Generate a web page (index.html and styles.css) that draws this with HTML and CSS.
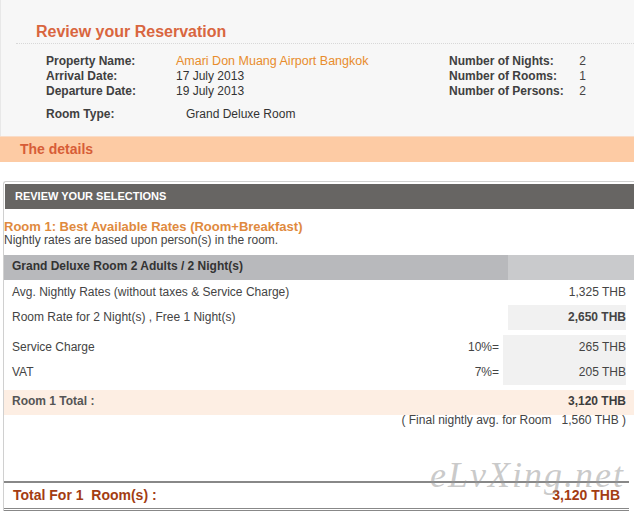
FILE: index.html
```html
<!DOCTYPE html>
<html lang="en">
<head>
    <meta charset="UTF-8">
    <title>Review your Reservation</title>
    <link rel="stylesheet" href="styles.css">
</head>
<body>
    <div class="summary">
        <h1 class="summary-title">Review your Reservation</h1>
        <div class="facts">
            <span class="fact-label">Property Name:</span>
            <span class="fact-value hotel">Amari Don Muang Airport Bangkok</span>
            <span class="fact-label">Number of Nights:</span>
            <span class="fact-num">2</span>

            <span class="fact-label">Arrival Date:</span>
            <span class="fact-value">17 July 2013</span>
            <span class="fact-label">Number of Rooms:</span>
            <span class="fact-num">1</span>

            <span class="fact-label">Departure Date:</span>
            <span class="fact-value">19 July 2013</span>
            <span class="fact-label">Number of Persons:</span>
            <span class="fact-num">2</span>
        </div>
        <div class="facts room-type">
            <span class="fact-label">Room Type:</span>
            <span class="fact-value">Grand Deluxe Room</span>
        </div>
    </div>

    <div class="details-band">The details</div>

    <div class="selections">
        <div class="selections-head">Review your selections</div>

        <div class="rate-title">Room 1: Best Available Rates (Room+Breakfast)</div>
        <div class="rate-note">Nightly rates are based upon person(s) in the room.</div>

        <div class="room-head">
            <div class="room-name">Grand Deluxe Room 2 Adults / 2 Night(s)</div>
            <div class="room-side"></div>
        </div>

        <div class="rate-row">
            <span class="rate-label">Avg. Nightly Rates (without taxes &amp; Service Charge)</span>
            <span class="rate-value">1,325 THB</span>
        </div>
        <div class="rate-row">
            <span class="rate-label">Room Rate for 2 Night(s) , Free 1 Night(s)</span>
            <span class="rate-value boxed strong">2,650 THB</span>
        </div>

        <div class="charges">
            <div class="charge-labels">
                <div class="charge-row"><span>Service Charge</span><span>10%=</span></div>
                <div class="charge-row"><span>VAT</span><span>7%=</span></div>
            </div>
            <div class="charge-values">
                <div>265 THB</div>
                <div>205 THB</div>
            </div>
        </div>

        <div class="room-total">
            <span>Room 1 Total :</span>
            <span class="room-total-value">3,120 THB</span>
        </div>
        <div class="final-avg">( Final nightly avg. for Room &nbsp; 1,560 THB )</div>

        <div class="grand-total">
            <span>Total For 1 &nbsp;Room(s) :</span>
            <span>3,120 THB</span>
        </div>

        <div class="watermark">eLvXing.net</div>
    </div>
</body>
</html>
```

FILE: styles.css
```css
body {
    margin: 0;
    font-family: "Liberation Sans", Arial, sans-serif;
    font-size: 12px;
    color: #444;
    background: #fff;
}

/* top summary */
.summary {
    background: #f7f7f7;
    border-left: 1px solid #e8e8e8;
    padding: 22px 0 14px;
}

.summary-title {
    margin: 0 0 0 15px;
    padding: 0 0 2px 20px;
    border-bottom: 1px dotted #d8d8d8;
    font-size: 16px;
    line-height: 19px;
    font-weight: bold;
    color: #d9663f;
}

.facts {
    display: grid;
    grid-template-columns: 130px 273px 128px 9px;
    margin: 10px 0 0 45px;
    line-height: 15px;
}

.facts.room-type {
    margin-top: 8px;
    grid-template-columns: 140px auto;
}

.fact-label {
    font-weight: bold;
    color: #404040;
}

.fact-value {
    color: #333;
}

.fact-value.hotel {
    color: #e88c2c;
    font-size: 12.5px;
}

.fact-num {
    text-align: right;
    color: #444;
}

.details-band {
    border-top: 1px solid #f9dcc8;
    background: #fdcba4;
    height: 25px;
    line-height: 25px;
    padding-left: 20px;
    font-size: 14px;
    font-weight: bold;
    color: #d75d37;
}

/* selections panel */
.selections {
    position: relative;
    margin: 19px 0 0 3px;
    padding-top: 2px;
    border-top: 1px solid #d0d0d0;
    border-left: 1px solid #d0d0d0;
    border-top-left-radius: 3px;
}

.selections-head {
    margin-left: 1px;
    height: 25px;
    line-height: 25px;
    padding-left: 10px;
    background: #676563;
    color: #fff;
    font-size: 11px;
    font-weight: bold;
    text-transform: uppercase;
}

.rate-title {
    margin-top: 10px;
    line-height: 15px;
    font-size: 13px;
    font-weight: bold;
    color: #df8a3e;
}

.rate-note {
    line-height: 13px;
    color: #444;
}

.room-head {
    display: flex;
    margin-top: 8px;
    height: 25px;
}

.room-name {
    flex: 1;
    background: #b8b9bc;
    padding-left: 8px;
    line-height: 23px;
    font-weight: bold;
    color: #333;
}

.room-side {
    width: 126px;
    background: #c9cacc;
}

.rate-row {
    display: flex;
    padding: 0 8px;
    line-height: 25px;
}

.rate-label {
    flex: 1;
}

.rate-value {
    width: 118px;
    text-align: right;
}

.boxed {
    background: #f1f1f1;
}

.strong {
    font-weight: bold;
}

.charges {
    display: flex;
    margin-top: 5px;
    padding: 0 8px;
    line-height: 25px;
}

.charge-labels {
    flex: 1;
    padding-right: 4px;
}

.charge-row {
    display: flex;
    justify-content: space-between;
}

.charge-values {
    width: 123px;
    background: #f1f1f1;
    text-align: right;
}

.room-total {
    display: flex;
    justify-content: space-between;
    margin-top: 5px;
    padding: 0 8px 2px;
    line-height: 23px;
    background: #fdeee3;
    font-weight: bold;
    color: #555;
}

.room-total-value {
    color: #3c3c3c;
}

.final-avg {
    padding-right: 8px;
    text-align: right;
    line-height: 10px;
}

.grand-total {
    display: flex;
    justify-content: space-between;
    margin: 56px 5px 0 0;
    padding: 0 9px 0 9px;
    border-top: 2px solid #888;
    border-bottom: 3px double #888;
    line-height: 25px;
    font-size: 14px;
    font-weight: bold;
    color: #a33c12;
}

/* watermark sits over the total line, as in the screenshot */
.watermark {
    position: absolute;
    top: 281px;
    left: 426px;
    font-family: "Liberation Serif", "Times New Roman", serif;
    font-style: italic;
    font-size: 36px;
    line-height: 24px;
    letter-spacing: 2px;
    color: rgba(150, 150, 150, 0.5);
}
```
